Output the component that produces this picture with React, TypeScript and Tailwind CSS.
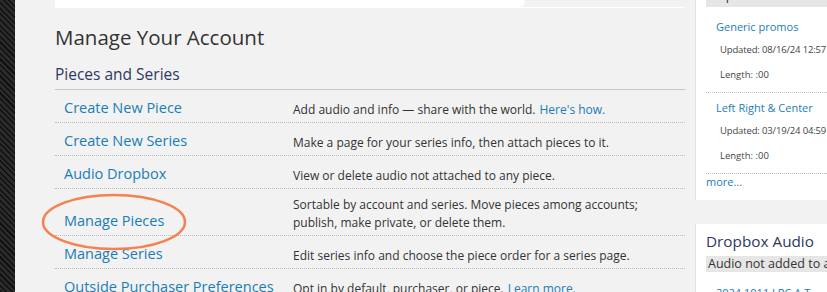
const rows = [
  { label: "Create New Piece", desc: "Add audio and info — share with the world.", extra: "Here's how." },
  { label: "Create New Series", desc: "Make a page for your series info, then attach pieces to it." },
  { label: "Audio Dropbox", desc: "View or delete audio not attached to any piece." },
  { label: "Manage Pieces", desc: "Sortable by account and series. Move pieces among accounts; publish, make private, or delete them." },
  { label: "Manage Series", desc: "Edit series info and choose the piece order for a series page." },
  { label: "Outside Purchaser Preferences", desc: "Opt in by default, purchaser, or piece.", extra: "Learn more." },
];

const unpublished = [
  { title: "Generic promos", updated: "08/16/24 12:57" },
  { title: "Left Right & Center", updated: "03/19/24 04:59" },
];

export default function App() {
  return (
    <div className="relative flex w-[827px] h-[292px] overflow-hidden bg-[#f2f2f2] font-['Open_Sans',sans-serif]">
      {/* striped page edge */}
      <div className="w-[15px] shrink-0 bg-[repeating-linear-gradient(45deg,#111_0px,#111_1.5px,#2b2b2b_1.5px,#2b2b2b_4px)]" />

      <main className="w-[680px] shrink-0 pl-[40px] pr-[10px]">
        <div className="h-[8px] border-b border-white">
          <div className="w-[470px] h-full bg-white rounded-br-[6px]" />
        </div>

        <h1 className="mt-[15px] text-[20.5px] leading-[28px] text-[#333]">Manage Your Account</h1>
        <h2 className="mt-[12px] pb-[4px] text-[15.5px] leading-[22px] text-[#2d3a5c] border-b border-[#c6c6c6]">
          Pieces and Series
        </h2>

        <div>
          {rows.map((row) => (
            <div key={row.label} className="flex items-end pt-[7px] pb-[3px] border-b border-dotted border-[#bdbdbd]">
              <a className="w-[238px] shrink-0 pl-[9px] text-[14.5px] leading-[22px] text-[#1a7db5] cursor-pointer whitespace-nowrap">
                {row.label}
              </a>
              <p className="flex-1 pr-[10px] text-[12px] leading-[18px] text-[#333]">
                {row.desc}
                {row.extra && <a className="ml-[4px] text-[#1a7db5] cursor-pointer">{row.extra}</a>}
              </p>
            </div>
          ))}
        </div>
      </main>

      <aside className="w-[220px] shrink-0">
        <section className="bg-white border-l border-[#e2e2e2] pl-[10px] pb-[10px]">
          <div className="mt-[-16px] h-[23px] bg-[#e6e6e6] pl-[3px] text-[12.5px] leading-[23px] text-[#333]">Unpublished</div>
          <div className="mt-[5px]">
            {unpublished.map((item) => (
              <div key={item.title} className="pt-[4px] pb-[5px] border-b border-dotted border-[#bdbdbd]">
                <a className="block pl-[10px] text-[11px] leading-[21px] text-[#1a7db5] cursor-pointer">{item.title}</a>
                <p className="pl-[14px] text-[9.5px] tracking-[-0.15px] leading-[25px] text-[#444] whitespace-nowrap">
                  Updated: {item.updated}
                </p>
                <p className="pl-[14px] text-[9.5px] leading-[25px] text-[#444]">Length: :00</p>
              </div>
            ))}
          </div>
          <a className="block text-[11px] leading-[16px] text-[#1a7db5] cursor-pointer">more...</a>
        </section>

        <section className="mt-[24px] bg-white border-l border-[#e2e2e2] pl-[10px] pt-[6px] pb-[10px]">
          <h3 className="text-[15.3px] leading-[22px] text-[#2d3a5c]">Dropbox Audio</h3>
          <div className="mt-[4px] h-[16px] bg-[#e6e6e6] pl-[2px] text-[12.5px] leading-[16px] text-[#333] whitespace-nowrap">
            Audio not added to a piece
          </div>
          <a className="block mt-[12px] pl-[10px] text-[11px] leading-[18px] text-[#1a7db5] whitespace-nowrap cursor-pointer">
            2024 1011 LRC A T...
          </a>
        </section>
      </aside>

      {/* annotation circle */}
      <svg className="absolute left-[40px] top-[190px] pointer-events-none" width="150" height="64" viewBox="0 0 150 64">
        <ellipse cx="74" cy="32" rx="71" ry="27" fill="none" stroke="#f5814e" strokeWidth="2.5" />
      </svg>
    </div>
  );
}
